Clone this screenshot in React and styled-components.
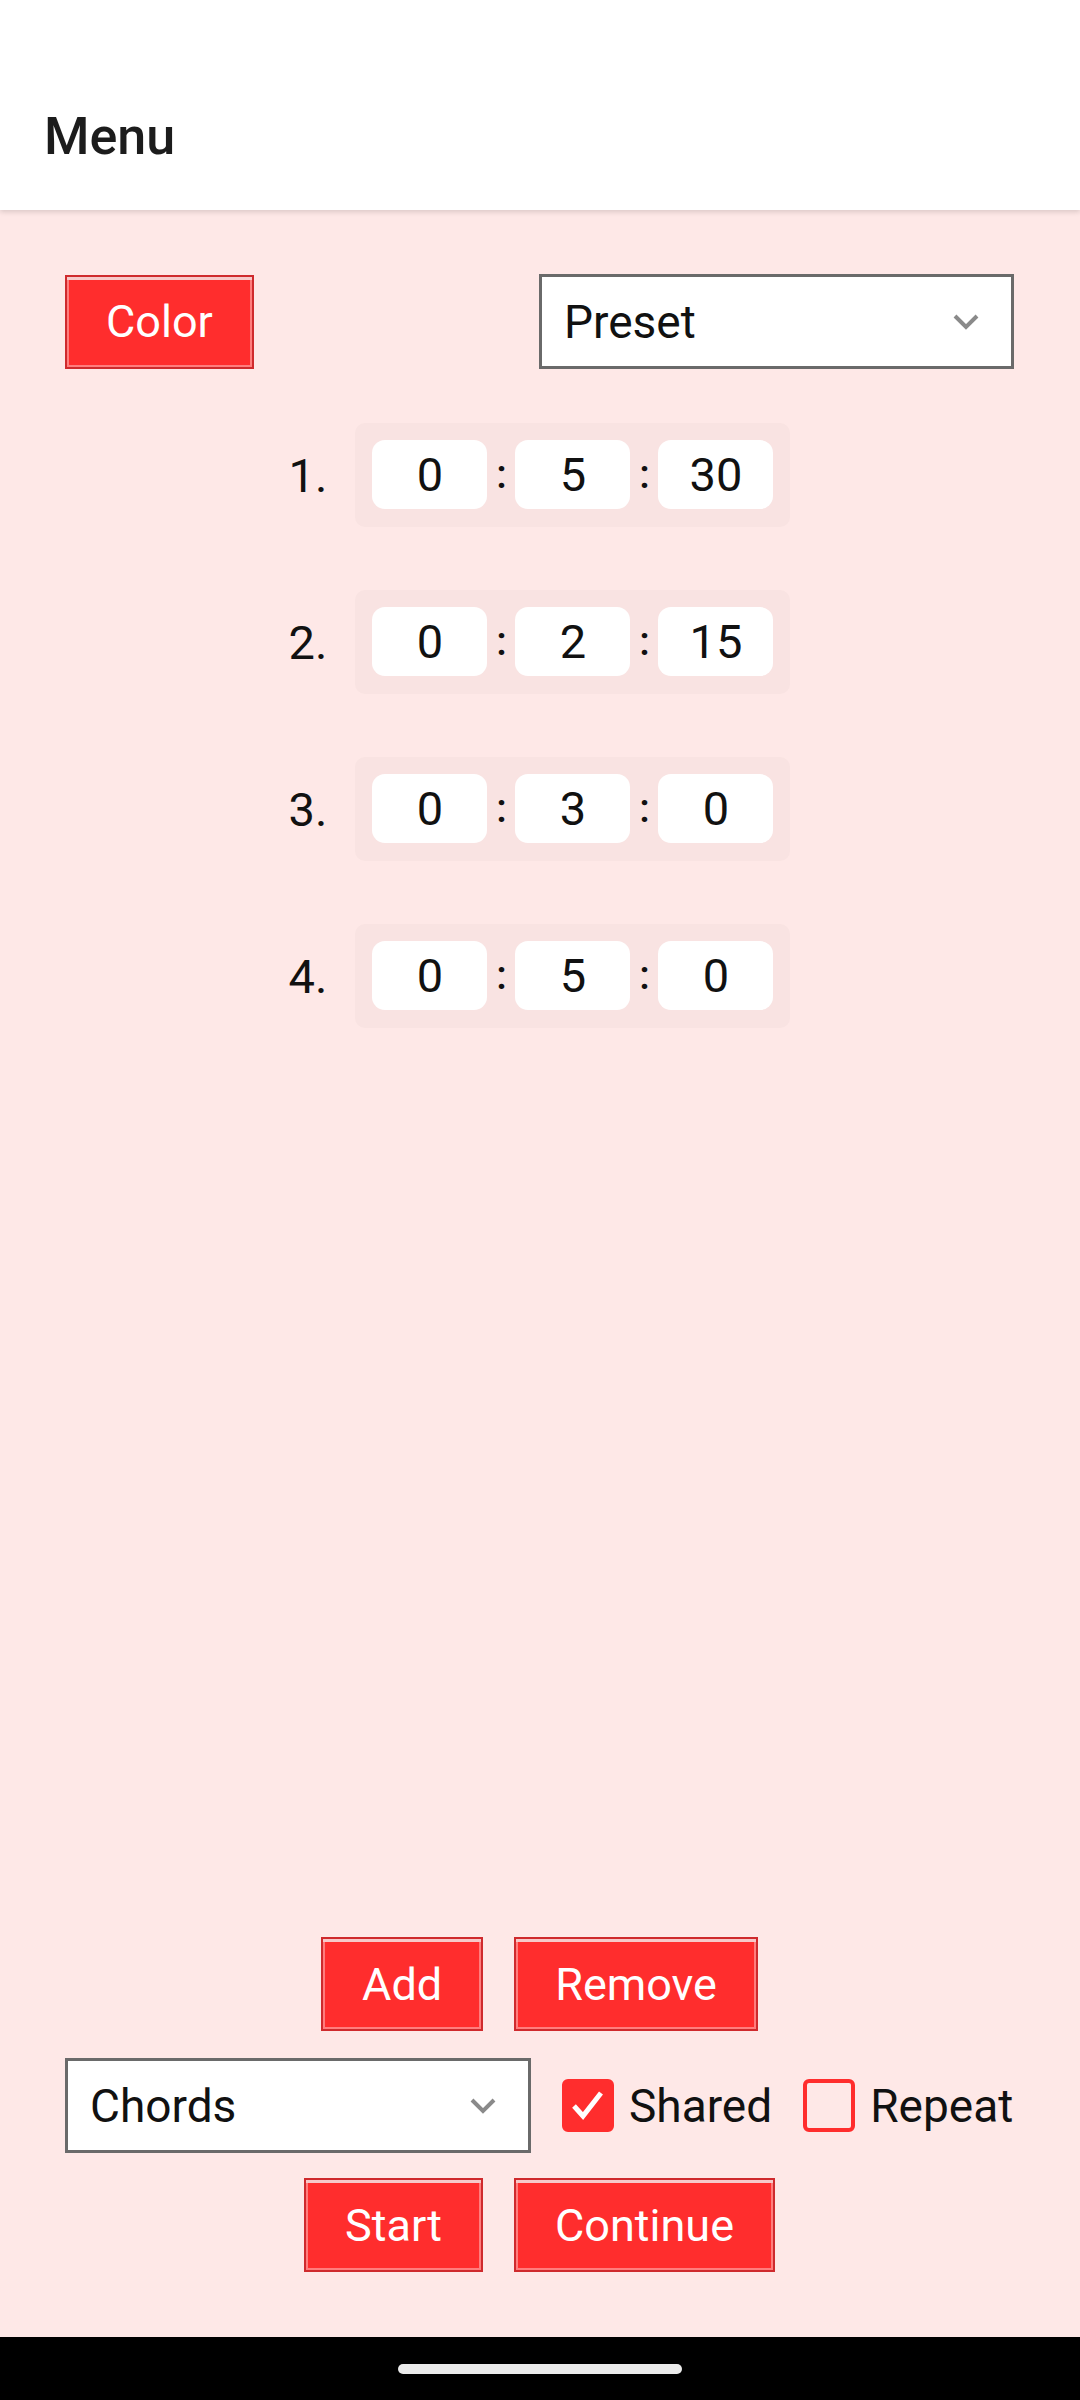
import React, { useState } from 'react'
import styled, { createGlobalStyle } from 'styled-components'

const GlobalStyle = createGlobalStyle`
  html, body {
    margin: 0;
    padding: 0;
    background: #fee8e7;
  }
  * { box-sizing: border-box; }
`

const Screen = styled.div`
  width: 1080px;
  height: 2400px;
  display: flex;
  flex-direction: column;
  background-color: #fee8e7;
  font-family: Roboto, "Noto Sans", sans-serif;
  color: #111;
`

const Header = styled.div`
  height: 210px;
  flex: none;
  display: flex;
  align-items: flex-end;
  padding: 0 0 47px 44px;
  background: #fff;
  box-shadow: 0 2px 5px rgba(0, 0, 0, 0.14);
  position: relative;
  z-index: 1;
  h1 {
    margin: 0;
    font-size: 52px;
    font-weight: 500;
    color: #1c1c1c;
    line-height: 1;
  }
`

const Main = styled.div`
  flex: 1;
  display: flex;
  flex-direction: column;
  padding: 64px 66px 65px 65px;
`

const TopRow = styled.div`
  display: flex;
  justify-content: space-between;
  align-items: center;
`

const RedButton = styled.button`
  height: 94px;
  padding: 0 39px;
  background-color: #ff2d2d;
  color: #fff;
  font-family: Roboto, sans-serif;
  font-size: 45px;
  border: 2px solid #cf2a2d;
  box-shadow: inset 0 3px 0 #f6c9c9, inset 0 0 0 2px #ff7d7d;
  cursor: pointer;
`

const Select = styled.div`
  width: ${p => p.width}px;
  height: 95px;
  display: flex;
  align-items: center;
  justify-content: space-between;
  padding: 0 31px 0 22px;
  background: #fff;
  border: 3px solid #6a6a6a;
  font-size: 46px;
  color: #111;
`

const Chevron = () => (
  <svg width="28" height="18" viewBox="0 0 28 18">
    <path d="M3 3 L14 14 L25 3" fill="none" stroke="#8a8a8a" strokeWidth="4" />
  </svg>
)

const List = styled.div`
  display: flex;
  flex-direction: column;
  align-items: center;
  gap: 63px;
  margin-top: 54px;
`

const Row = styled.div`
  display: flex;
  align-items: center;
  gap: 28px;
`

const Num = styled.span`
  font-size: 47px;
`

const TimeBox = styled.div`
  display: flex;
  align-items: center;
  padding: 17px 17px 18px;
  background: #f9e3e2;
  border-radius: 10px;
`

const Field = styled.div`
  width: 115px;
  height: 69px;
  display: flex;
  align-items: center;
  justify-content: center;
  background: #fff;
  border-radius: 13px;
  font-size: 47px;
`

const Colon = styled.span`
  width: 28px;
  text-align: center;
  font-size: 40px;
  font-weight: 500;
`

const Spacer = styled.div`
  flex: 1;
`

const ButtonRow = styled.div`
  display: flex;
  justify-content: center;
  gap: 31px;
`

const OptionRow = styled.div`
  display: flex;
  align-items: center;
  margin: 27px 0 25px;
`

const Check = styled.label`
  display: flex;
  align-items: center;
  gap: 15px;
  margin-left: 31px;
  font-size: 46px;
  cursor: pointer;
`

const Box = styled.span`
  width: 52px;
  height: 53px;
  display: flex;
  align-items: center;
  justify-content: center;
  border-radius: 6px;
  border: 4px solid #ff2d2d;
  background: ${p => (p.checked ? '#ff2d2d' : 'transparent')};
`

const NavBar = styled.div`
  height: 63px;
  flex: none;
  display: flex;
  justify-content: center;
  padding-top: 27px;
  background: #000;
  span {
    width: 284px;
    height: 10px;
    border-radius: 5px;
    background: #ebebeb;
  }
`

const times = [
  ['0', '5', '30'],
  ['0', '2', '15'],
  ['0', '3', '0'],
  ['0', '5', '0'],
]

const Tick = () => (
  <svg width="36" height="34" viewBox="0 0 36 34">
    <path d="M4 17 L13 27 L31 4" fill="none" stroke="#fff" strokeWidth="5" />
  </svg>
)

const App = () => {
  const [shared, setShared] = useState(true)
  const [repeat, setRepeat] = useState(false)

  return (
    <Screen>
      <GlobalStyle />
      <Header>
        <h1>Menu</h1>
      </Header>
      <Main>
        <TopRow>
          <RedButton>Color</RedButton>
          <Select width={475}>
            Preset
            <Chevron />
          </Select>
        </TopRow>

        <List>
          {times.map((t, i) => (
            <Row key={i}>
              <Num>{i + 1}.</Num>
              <TimeBox>
                <Field>{t[0]}</Field>
                <Colon>:</Colon>
                <Field>{t[1]}</Field>
                <Colon>:</Colon>
                <Field>{t[2]}</Field>
              </TimeBox>
            </Row>
          ))}
        </List>

        <Spacer />

        <ButtonRow>
          <RedButton>Add</RedButton>
          <RedButton>Remove</RedButton>
        </ButtonRow>

        <OptionRow>
          <Select width={466}>
            Chords
            <Chevron />
          </Select>
          <Check onClick={() => setShared(!shared)}>
            <Box checked={shared}>{shared && <Tick />}</Box>
            Shared
          </Check>
          <Check onClick={() => setRepeat(!repeat)}>
            <Box checked={repeat}>{repeat && <Tick />}</Box>
            Repeat
          </Check>
        </OptionRow>

        <ButtonRow>
          <RedButton>Start</RedButton>
          <RedButton>Continue</RedButton>
        </ButtonRow>
      </Main>
      <NavBar>
        <span />
      </NavBar>
    </Screen>
  )
}

export default App
